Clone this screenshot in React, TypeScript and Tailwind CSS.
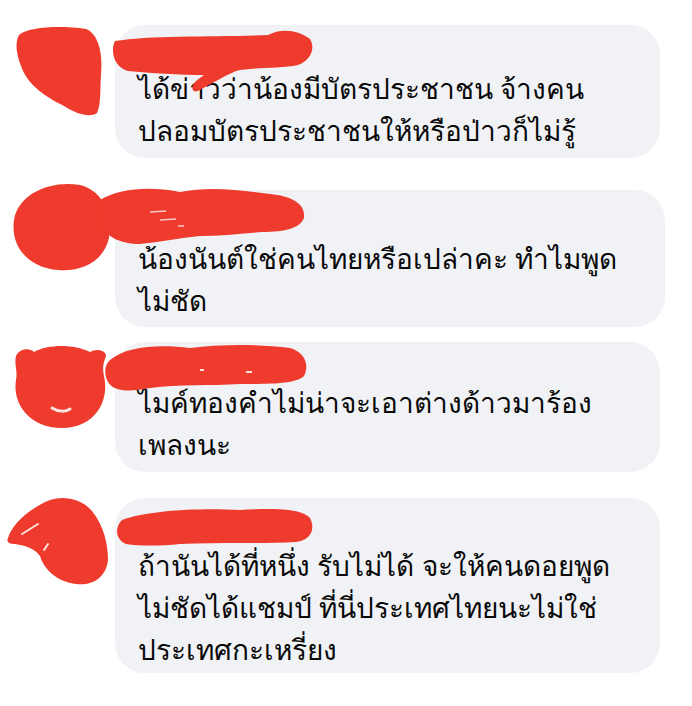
const RED = "#ef3b2d"

type Comment = {
    lines: string[]
    width: string
    pad: string
    gap: string
    avatar: JSX.Element
    name: JSX.Element
}

const comments: Comment[] = [
    {
        lines: ["ได้ข่าวว่าน้องมีบัตรประชาชน จ้างคน", "ปลอมบัตรประชาชนให้หรือป่าวก็ไม่รู้"],
        width: "w-[545px]",
        pad: "pt-[42px] pb-[7px]",
        gap: "mt-[25px]",
        avatar: (
            <path d="M19 10 C28 2 60 0 86 4 C99 9 103 30 101 50 C100 66 101 80 97 88 C90 93 76 89 64 81 C44 71 27 59 21 41 C16 28 15 17 19 10 Z" />
        ),
        name: (
            <path d="M115 16 C150 10 220 12 268 10 C282 2 300 6 310 14 C316 24 310 36 298 40 C280 44 250 42 236 46 C222 52 206 62 198 66 C192 68 190 62 196 56 L204 50 C180 50 150 48 128 46 C114 42 110 26 115 16 Z" />
        ),
    },
    {
        lines: ["น้องนันต์ใช่คนไทยหรือเปล่าคะ ทำไมพูด", "ไม่ชัด"],
        width: "w-[550px]",
        pad: "pt-[47px] pb-[6px]",
        gap: "mt-[32px]",
        avatar: (
            <path d="M14 30 C18 4 50 -10 80 -5 C104 1 113 26 109 48 C104 70 84 82 58 80 C30 78 10 58 14 30 Z" />
        ),
        name: (
            <>
                <path d="M100 10 C120 -2 150 -4 180 2 C210 -4 240 0 270 4 C292 6 306 14 304 28 C300 38 286 42 262 42 C240 44 220 46 200 46 C180 48 160 52 140 54 C120 54 104 46 102 34 C100 26 98 18 100 10 Z" />
                <path d="M150 22 L166 21 M160 30 L176 29 M178 36 L184 36" stroke="#f7c9c4" strokeWidth="1.5" fill="none" />
            </>
        ),
    },
    {
        lines: ["ไมค์ทองคำไม่น่าจะเอาต่างด้าวมาร้อง", "เพลงนะ"],
        width: "w-[545px]",
        pad: "pt-[39px] pb-[7px]",
        gap: "mt-[15px]",
        avatar: (
            <>
                <path d="M16 14 C20 6 30 6 34 10 C48 2 74 2 90 10 C96 6 106 8 106 14 C104 20 102 24 104 34 C110 60 94 86 62 86 C30 86 12 62 16 38 C18 30 14 22 16 14 Z" />
                <path d="M52 66 C58 70 66 70 70 67" stroke="#fbe3e0" strokeWidth="3" fill="none" strokeLinecap="round" />
            </>
        ),
        name: (
            <>
                <path d="M110 18 C126 4 160 2 190 6 C220 2 260 2 290 6 C304 10 310 22 304 34 C296 42 270 42 240 42 C210 44 180 42 150 46 C130 50 114 50 108 40 C104 32 104 24 110 18 Z" />
                <path d="M200 28 L204 28 M246 30 L252 30" stroke="#fbe3e0" strokeWidth="2" fill="none" />
            </>
        ),
    },
    {
        lines: ["ถ้านันได้ที่หนึ่ง รับไม่ได้ จะให้คนดอยพูด", "ไม่ชัดได้แชมป์ ที่นี่ประเทศไทยนะไม่ใช่", "ประเทศกะเหรี่ยง"],
        width: "w-[545px]",
        pad: "pt-[46px] pb-[3px]",
        gap: "mt-[26px]",
        avatar: (
            <>
                <path d="M8 40 C12 26 30 10 50 2 C64 -3 82 1 92 13 C104 28 108 46 108 62 C106 80 92 88 76 86 C58 84 44 72 40 58 C34 50 26 48 15 46 C9 46 6 44 8 40 Z" />
                <path d="M22 36 L38 26 M44 52 L48 46" stroke="#fbe3e0" strokeWidth="2" fill="none" strokeLinecap="round" />
            </>
        ),
        name: (
            <path d="M122 22 C150 12 200 10 240 12 C272 10 302 10 310 20 C316 32 310 42 296 44 C260 46 220 44 180 46 C160 48 140 48 126 46 C116 42 114 30 122 22 Z" />
        ),
    },
]

const App = () => {
    return (
        <div className="w-[692px] h-[706px] bg-white overflow-hidden font-['Noto_Sans',sans-serif]">
            {comments.map((c, i) => (
                <div key={i} className={`relative flex ${c.gap}`}>
                    <div className="w-[115px] shrink-0">
                        <svg width="115" height="90" viewBox="0 0 115 90" className="overflow-visible" fill={RED}>
                            {c.avatar}
                        </svg>
                    </div>
                    <div className={`${c.width} ${c.pad} rounded-[30px] bg-[#f0f2f5] pl-[23px] text-[28px] font-medium leading-[42px] text-[#0a0a0a]`}>
                        {c.lines.map((l, j) => (
                            <div key={j}>{l}</div>
                        ))}
                    </div>
                    <svg
                        className="absolute left-0 top-0 overflow-visible pointer-events-none"
                        width="692"
                        height="80"
                        viewBox="0 0 692 80"
                        fill={RED}
                    >
                        {c.name}
                    </svg>
                </div>
            ))}
        </div>
    )
}

export default App
